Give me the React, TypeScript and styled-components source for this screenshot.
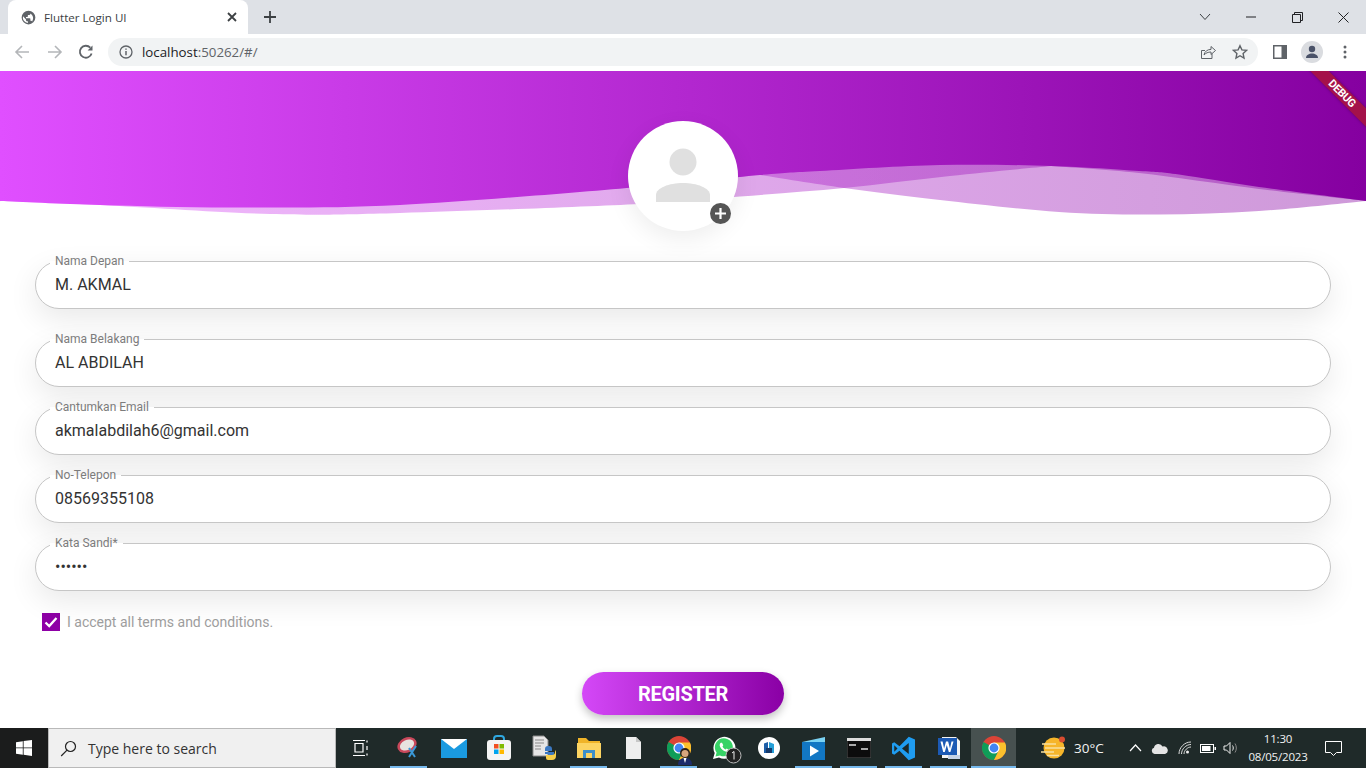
import React from "react";
import styled, { createGlobalStyle } from "styled-components";

const Global = createGlobalStyle`
  html, body { margin: 0; padding: 0; height: 100%; overflow: hidden; background: #fff; }
  * { box-sizing: border-box; }
`;

const Shell = styled.div`
  width: 1366px; height: 768px; display: flex; flex-direction: column; overflow: hidden;
  font-family: Roboto, "Liberation Sans", sans-serif;
`;

/* browser chrome */
const TabStrip = styled.div`
  height: 34px; flex: none; background: #dee1e6; display: flex; align-items: stretch; padding-left: 8px; position: relative;
`;
const Tab = styled.div`
  width: 240px; background: #fff; border-radius: 8px 8px 0 0; display: flex; align-items: center; padding: 0 8px 0 13px;
`;
const TabTitle = styled.span`
  flex: 1; margin-left: 8px; font: 11.6px "Open Sans", "Liberation Sans", sans-serif; color: #3c4043;
`;
const NewTab = styled.div`
  width: 44px; display: flex; align-items: center; justify-content: center; color: #3c4043;
`;
const Spacer = styled.div`flex: 1;`;
const WinButton = styled.div`
  width: 46px; display: flex; align-items: center; justify-content: center; color: #202124;
`;
const Toolbar = styled.div`
  height: 37px; flex: none; background: #fff; display: flex; align-items: center; padding: 0 0 1px 3px;
`;
const NavButton = styled.div<{ $w: number }>`
  width: ${(p) => p.$w}px; height: 28px; display: flex; align-items: center; justify-content: center; flex: none;
`;
const Omnibox = styled.div`
  width: 1150px; height: 28px; margin-left: 6px; background: #f1f3f4; border-radius: 14px; display: flex; align-items: center; padding: 0 10px 0 11px; flex: none;
`;
const Url = styled.span`
  margin-left: 9px; font: 13.3px "Open Sans", "Liberation Sans", sans-serif; color: #202124; flex: 1;
  span { color: #5f6368; }
`;
const OmniIcon = styled.svg<{ $mr: number }>`
  margin-right: ${(p) => p.$mr}px; flex: none;
`;
const Avatar = styled.div`
  width: 22px; height: 22px; border-radius: 50%; background: #dadce0; display: flex; align-items: center; justify-content: center;
`;

/* page */
const Page = styled.main`
  flex: 1; background: #fff; position: relative; overflow: hidden; min-height: 0;
`;
const Header = styled.header`
  height: 160px; position: relative;
`;
const WaveSvg = styled.svg`
  display: block; width: 1366px; height: 160px;
`;
const RibbonClip = styled.div`
  position: absolute; top: 0; right: 0; width: 60px; height: 60px; overflow: hidden;
`;
const Ribbon = styled.div`
  position: absolute; left: -24px; top: 16px; width: 120px; height: 13px; transform: rotate(45deg);
  background: rgba(176, 24, 40, 0.72); box-shadow: 0 0 3px rgba(0,0,0,.3);
  color: #fff; font: 700 11px/13px Roboto, sans-serif; text-align: center; letter-spacing: -0.3px;
`;
const AvatarCircle = styled.div`
  position: absolute; left: 628px; top: 50px; width: 110px; height: 110px; border-radius: 50%; background: #fff;
  box-shadow: 0 8px 24px rgba(0,0,0,.07); display: flex; align-items: center; justify-content: center;
`;
const AddBadge = styled.div`
  position: absolute; right: 7px; bottom: 7px; width: 21px; height: 21px; border-radius: 50%; background: #555; display: flex; align-items: center; justify-content: center;
`;
const Form = styled.form`
  display: flex; flex-direction: column; padding: 30px 35px 0 35px;
`;
const Field = styled.div<{ $mb: number }>`
  height: 48px; margin-bottom: ${(p) => p.$mb}px; border: 1px solid #c6c6c6; border-radius: 24px; background: #fff;
  box-shadow: 0 10px 30px rgba(0,0,0,.09); position: relative; display: flex; align-items: center; padding: 0 19px 2px;
  font-size: 16px; color: #333; flex: none;
`;
const FieldLabel = styled.label`
  position: absolute; left: 14px; top: -8px; padding: 0 5px; background: linear-gradient(#fff0 0 7px, #fff 7px); font-size: 12px; line-height: 14px; color: #7c7c7c;
`;
const CheckRow = styled.div`
  display: flex; align-items: center; margin: 0 0 0 7px; height: 18px; font-size: 14px; color: #9e9e9e; gap: 7px;
`;
const CheckBox = styled.div`
  width: 18px; height: 18px; background: #8e00a6; display: flex; align-items: center; justify-content: center;
`;
const RegisterButton = styled.button`
  align-self: center; margin-top: 41px; width: 202px; height: 43px; border: 0; border-radius: 22px;
  background: linear-gradient(90deg, #d448f7, #8a00a5); color: #fff; font: 700 20px Roboto, sans-serif; letter-spacing: -0.3px; padding: 0;
  box-shadow: 0 4px 8px rgba(0,0,0,.24);
`;

/* taskbar */
const Taskbar = styled.footer`
  height: 40px; flex: none; background: #1f2a29; display: flex; align-items: center; color: #fff;
`;
const StartBtn = styled.div`
  width: 48px; height: 40px; flex: none; display: flex; align-items: center; justify-content: center; background: #1b1c1c;
`;
const Search = styled.div`
  width: 288px; height: 40px; flex: none; background: #f0f0f0; border: 1px solid #b9b9b9; display: flex; align-items: center; padding-left: 11px; gap: 11px;
  font: 14px "Open Sans", "Liberation Sans", sans-serif; color: #333;
`;
const Slot = styled.div<{ $w?: number; $open?: boolean; $active?: boolean }>`
  width: ${(p) => p.$w ?? 45}px; height: 40px; flex: none; display: flex; align-items: center; justify-content: center; position: relative;
  background: ${(p) => (p.$active ? "#475150" : "transparent")};
  &::after {
    content: ""; display: ${(p) => (p.$open ? "block" : "none")}; position: absolute; bottom: 0; left: ${(p) => (p.$active ? 0 : 4)}px; right: ${(p) => (p.$active ? 0 : 4)}px; height: 2px; background: #76b9ed;
  }
`;
const TaskViewSlot = styled(Slot)`
  padding-right: 2px;
`;
const ProfilePhoto = styled.svg`
  position: absolute; left: 21px; top: 19px;
`;
const CountBadge = styled.svg`
  position: absolute; left: 24px; top: 19px;
`;
const WeatherWrap = styled.div`
  display: flex; align-items: center; flex: none; width: 109px; padding-left: 25px;
`;
const Temp = styled.span`
  font: 13.5px "Open Sans", "Liberation Sans", sans-serif; color: #f2f2f2; margin-left: 7px;
`;
const Tray = styled.div`
  display: flex; align-items: center; height: 40px; flex: none;
`;
const TrayItem = styled.div<{ $w: number }>`
  width: ${(p) => p.$w}px; display: flex; align-items: center; justify-content: center;
`;
const Clock = styled.div`
  width: 72px; text-align: center; font: 11.5px/18px "Open Sans", "Liberation Sans", sans-serif; color: #f2f2f2; letter-spacing: -0.2px;
`;
const Notif = styled.div`
  width: 38px; display: flex; align-items: center; justify-content: center;
`;

type Pt = [number, number];
/* Catmull-Rom run through points, written as cubic segments */
const run = (p: Pt[]) => {
  let d = "";
  for (let i = 0; i < p.length - 1; i++) {
    const a = p[Math.max(0, i - 1)], b = p[i], c = p[i + 1], e = p[Math.min(p.length - 1, i + 2)];
    const c1: Pt = [b[0] + (c[0] - a[0]) / 6, b[1] + (c[1] - a[1]) / 6];
    const c2: Pt = [c[0] - (e[0] - b[0]) / 6, c[1] - (e[1] - b[1]) / 6];
    d += `C${c1[0].toFixed(1)} ${c1[1].toFixed(1)} ${c2[0].toFixed(1)} ${c2[1].toFixed(1)} ${c[0]} ${c[1]}`;
  }
  return d;
};
const solid: Pt[] = [[0,130],[100,134],[230,136.5],[400,134],[640,116],[760,104],[820,100],[940,94],[1051,95],[1139,100],[1179,103.5],[1259,116],[1366,130]];
const backLeftA: Pt[] = [[0,130],[100,134],[270,143],[400,142],[640,133],[740,125.5],[844,117],[950,105],[1051,95]];
const backLeftB: Pt[] = [[1051,95],[1139,102],[1259,118],[1366,130]];
const backRight: Pt[] = [[760,104],[844,117],[940,129],[1059,141],[1159,143.5],[1259,140],[1366,130]];
const solidPath = `M0 130${run(solid)}L1366 0L0 0Z`;
const leftPath = `M0 130${run(backLeftA)}${run(backLeftB)}L1366 0L0 0Z`;
const rightPath = `M760 104${run(backRight)}L1366 60L760 60Z`;

const ChromeIcon = ({ s = 24 }: { s?: number }) => (
  <svg width={s} height={s} viewBox="0 0 24 24">
    <circle cx="12" cy="12" r="12" fill="#db4437" />
    <path d="M12 12 1.600 6 A12 12 0 0 0 12 24 L17 14Z" fill="#0f9d58" />
    <path d="M12 6.500H22.900A12 12 0 0 1 12 24L17 14Z" fill="#fbc02d" />
    <circle cx="12" cy="12" r="5.600" fill="#fff" />
    <circle cx="12" cy="12" r="4.400" fill="#4285f4" />
  </svg>
);

const fields: { label: string; value: string; mb: number }[] = [
  { label: "Nama Depan", value: "M. AKMAL", mb: 30 },
  { label: "Nama Belakang", value: "AL ABDILAH", mb: 20 },
  { label: "Cantumkan Email", value: "akmalabdilah6@gmail.com", mb: 20 },
  { label: "No-Telepon", value: "08569355108", mb: 20 },
  { label: "Kata Sandi*", value: "••••••", mb: 22 },
];

export default function App() {
  return (
    <Shell>
      <Global />
      <TabStrip>
        <Tab>
          <svg width="15" height="15" viewBox="0 0 24 24" fill="#5f6368">
            <path d="M12 1a11 11 0 1 0 0 22 11 11 0 0 0 0-22Zm-1 19.900A9 9 0 0 1 3.200 10L8 15v1c0 1.100.9 2 2 2h1v2.900Zm6.900-2.500A2 2 0 0 0 16 17h-1v-3c0-.6-.4-1-1-1H8v-2h2c.6 0 1-.4 1-1V8h2a2 2 0 0 0 2-2v-.4a9 9 0 0 1 2.900 12.800Z" />
          </svg>
          <TabTitle>Flutter Login UI</TabTitle>
          <svg width="16" height="16" viewBox="0 0 16 16" stroke="#3c4043" strokeWidth="1.800" fill="none">
            <path d="M4 4l8 8M12 4l-8 8" />
          </svg>
        </Tab>
        <NewTab>
          <svg width="14" height="14" viewBox="0 0 14 14" stroke="#3c4043" strokeWidth="1.800"><path d="M7 1v12M1 7h12" /></svg>
        </NewTab>
        <Spacer />
        <WinButton>
          <svg width="12" height="8" viewBox="0 0 12 8" stroke="#3c4043" fill="none"><path d="M1 1l5 5.500L11 1" /></svg>
        </WinButton>
        <WinButton>
          <svg width="10" height="2" viewBox="0 0 10 2" stroke="#202124"><path d="M0 1h10" /></svg>
        </WinButton>
        <WinButton>
          <svg width="11" height="11" viewBox="0 0 11 11" stroke="#202124" fill="none"><path d="M.5 2.500h8v8h-8zM2.500 2.500v-2h8v8h-2" /></svg>
        </WinButton>
        <WinButton>
          <svg width="11" height="11" viewBox="0 0 11 11" stroke="#202124" fill="none"><path d="M.5.500l10 10M10.500.500l-10 10" /></svg>
        </WinButton>
      </TabStrip>
      <Toolbar>
        <NavButton $w={38}>
          <svg width="16" height="16" viewBox="0 0 16 16" stroke="#b4b6b9" strokeWidth="1.600" fill="none"><path d="M15 8H2M8 2 2 8l6 6" /></svg>
        </NavButton>
        <NavButton $w={28}>
          <svg width="16" height="16" viewBox="0 0 16 16" stroke="#b4b6b9" strokeWidth="1.600" fill="none"><path d="M1 8h13M8 2l6 6-6 6" /></svg>
        </NavButton>
        <NavButton $w={33}>
          <svg width="16" height="16" viewBox="0 0 16 16" stroke="#5f6368" strokeWidth="1.800" fill="none"><path d="M13.600 9.500A6 6 0 1 1 12.300 3.700" /><path d="M14.500 1.500v4.900H9.600Z" fill="#5f6368" stroke="none" /></svg>
        </NavButton>
        <Omnibox>
          <svg width="14" height="14" viewBox="0 0 14 14" fill="none" stroke="#5f6368" strokeWidth="1.300">
            <circle cx="7" cy="7" r="6" />
            <path d="M7 6v4.200M7 3.400v1.400" strokeWidth="1.500" />
          </svg>
          <Url>localhost<span>:50262/#/</span></Url>
          <OmniIcon $mr={16} width="16" height="16" viewBox="0 0 16 16" stroke="#5f6368" fill="none">
            <path d="M12 9.500V14.500H1.500V6.500H5" />
            <path d="M4 11c.6-3.600 3.500-5.600 7-5.600V2.500l4.500 4-4.500 4V8C8 8 5.800 9 4 11Z" />
          </OmniIcon>
          <OmniIcon $mr={0} width="16" height="16" viewBox="0 0 16 16" stroke="#5f6368" strokeWidth="1.400" fill="none">
            <path d="M8 1.700l1.900 4.200 4.600.5-3.400 3.100.9 4.500-4-2.300-4 2.300.9-4.500-3.400-3.100 4.600-.5Z" />
          </OmniIcon>
        </Omnibox>
        <NavButton $w={43}>
          <svg width="14" height="14" viewBox="0 0 14 14"><rect width="14" height="14" fill="#5f6368" /><rect x="1.500" y="1.500" width="7" height="11" fill="#fff" /></svg>
        </NavButton>
        <NavButton $w={22}>
          <Avatar>
            <svg width="14" height="14" viewBox="0 0 14 14" fill="#4a5268"><circle cx="7" cy="4" r="3.200" /><path d="M1 13c0-3 3-4.500 6-4.500s6 1.500 6 4.500Z" /></svg>
          </Avatar>
        </NavButton>
        <NavButton $w={44}>
          <svg width="4" height="14" viewBox="0 0 4 14" fill="#5f6368"><circle cx="2" cy="2" r="1.500" /><circle cx="2" cy="7" r="1.500" /><circle cx="2" cy="12" r="1.500" /></svg>
        </NavButton>
      </Toolbar>
      <Page>
        <Header>
          <WaveSvg viewBox="0 0 1366 160">
            <defs>
              <linearGradient id="g" gradientUnits="userSpaceOnUse" x1="0" y1="0" x2="1366" y2="0">
                <stop offset="0" stopColor="#e04fff" />
                <stop offset="1" stopColor="#8500a0" />
              </linearGradient>
            </defs>
            <path d={leftPath} fill="url(#g)" opacity=".4" />
            <path d={rightPath} fill="url(#g)" opacity=".4" />
            <path d={solidPath} fill="url(#g)" />
          </WaveSvg>
          <RibbonClip>
            <Ribbon>DEBUG</Ribbon>
          </RibbonClip>
          <AvatarCircle>
            <svg width="56" height="56" viewBox="0 0 56 56" fill="#e0e0e0">
              <circle cx="28" cy="14" r="13.500" />
              <path d="M1 54V47C1 40 14 35 28 35S55 40 55 47V54Z" />
            </svg>
            <AddBadge>
              <svg width="11" height="11" viewBox="0 0 11 11" stroke="#fff" strokeWidth="2.200"><path d="M5.500 0v11M0 5.500h11" /></svg>
            </AddBadge>
          </AvatarCircle>
        </Header>
        <Form>
          {fields.map((f) => (
            <Field key={f.label} $mb={f.mb}>
              <FieldLabel>{f.label}</FieldLabel>
              {f.value}
            </Field>
          ))}
          <CheckRow>
            <CheckBox>
              <svg width="14" height="14" viewBox="0 0 14 14" fill="none" stroke="#fff" strokeWidth="2.300"><path d="M1.500 7.500 5.200 11 12.500 3" /></svg>
            </CheckBox>
            I accept all terms and conditions.
          </CheckRow>
          <RegisterButton type="button">REGISTER</RegisterButton>
        </Form>
      </Page>
      <Taskbar>
        <StartBtn>
          <svg width="16" height="16" viewBox="0 0 16 16" fill="#fff"><path d="M0 2.200 6.800 1.200V7.500H0ZM7.600 1.100 16 0V7.500H7.600ZM0 8.300H6.800V14.700L0 13.800ZM7.600 8.300H16V16L7.600 14.800Z" /></svg>
        </StartBtn>
        <Search>
          <svg width="17" height="17" viewBox="0 0 17 17" fill="none" stroke="#222" strokeWidth="1.200"><circle cx="10.500" cy="6.500" r="5" /><path d="M7 10.200 1.200 16" /></svg>
          Type here to search
        </Search>
        <TaskViewSlot $w={50}>
          <svg width="17" height="16" viewBox="0 0 17 16" fill="none" stroke="#fff" strokeWidth="1.200"><path d="M1 .5h12M1 15.500h12M3 3.500h8v8.500H3zM15 .5v2M15 6v4M15 13.500v2" /></svg>
        </TaskViewSlot>
        <Slot $open>
          <svg width="26" height="24" viewBox="0 0 26 24">
            <ellipse cx="11" cy="9" rx="10" ry="7.500" fill="#c9485b" transform="rotate(-25 11 9)" />
            <ellipse cx="11" cy="9" rx="7.500" ry="5" fill="#e8e3df" transform="rotate(-25 11 9)" />
            <path d="M13 12l6 9M20 10l-7 11" stroke="#3a9ad9" strokeWidth="2" />
          </svg>
        </Slot>
        <Slot>
          <svg width="26" height="22" viewBox="0 0 26 22">
            <rect y="2" width="26" height="19" fill="#1a9ae0" />
            <path d="M0 2h26L13 12Z" fill="#ffffff" />
          </svg>
        </Slot>
        <Slot>
          <svg width="24" height="26" viewBox="0 0 24 26">
            <path d="M7 6V4a3 3 0 0 1 3-3h4a3 3 0 0 1 3 3v2" fill="none" stroke="#2fa8e0" strokeWidth="2" />
            <rect y="5" width="24" height="20" rx="3" fill="#f4f4f4" />
            <rect x="7" y="9" width="4.500" height="4.500" fill="#f25022" /><rect x="12.500" y="9" width="4.500" height="4.500" fill="#7fba00" />
            <rect x="7" y="14.500" width="4.500" height="4.500" fill="#00a4ef" /><rect x="12.500" y="14.500" width="4.500" height="4.500" fill="#ffb900" />
          </svg>
        </Slot>
        <Slot>
          <svg width="24" height="26" viewBox="0 0 24 26">
            <path d="M1 1h11l4 4v16H1Z" fill="#e6e6e6" stroke="#8a8a8a" />
            <path d="M3 5h9M3 8h9M3 11h6M3 14h6" stroke="#888" />
            <path d="M13 11h4a3 3 0 0 1 3 3v2h-7v1h9v2a3 3 0 0 1-3 3h-3v-3h-3v-5a3 3 0 0 1 3-3Z" fill="#3b78c2" />
            <path d="M23 15a3 3 0 0 1 1 2v4a4 4 0 0 1-4 4h-4a2 2 0 0 1-2-2v-3h6a3 3 0 0 0 3-3Z" fill="#f7cf4a" />
          </svg>
        </Slot>
        <Slot $open>
          <svg width="24" height="22" viewBox="0 0 24 22">
            <path d="M1 1h8l3 3h11v16H1Z" fill="#f0b429" />
            <rect y="6" width="24" height="15" fill="#fcd462" />
            <rect x="6" y="13" width="12" height="8" fill="#3d8fc9" />
            <rect x="9" y="16" width="6" height="5" fill="#fcd462" />
          </svg>
        </Slot>
        <Slot>
          <svg width="17" height="22" viewBox="0 0 17 22"><path d="M1 0h10l5 5v17H1Z" fill="#eeeeee" /><path d="M11 0v5h5Z" fill="#c8c8c8" /></svg>
        </Slot>
        <Slot $open>
          <ChromeIcon />
          <ProfilePhoto width="16" height="18" viewBox="0 0 16 18">
            <circle cx="8" cy="6" r="5" fill="#2c2018" />
            <circle cx="8" cy="6.500" r="3.500" fill="#d8a57d" />
            <path d="M1 18c0-5 3-7 7-7s7 2 7 7Z" fill="#1d2c6b" />
            <path d="M6.500 11h3L8 16Z" fill="#fff" />
          </ProfilePhoto>
        </Slot>
        <Slot>
          <svg width="24" height="24" viewBox="0 0 24 24">
            <path d="M1 23l1.700-6A11 11 0 1 1 7 21.400Z" fill="#fff" />
            <path d="M3.500 20.500l1.100-3.900A9 9 0 1 1 8 19.400Z" fill="#37d366" />
            <path d="M8.800 6.800c-1.300 1-1.400 2.600-.6 4.300 1.100 2.200 3 3.800 5.200 4.500 1.700.4 3.100-.3 3.500-1.600l-2.200-1.500-1.100 1c-1.300-.5-2.500-1.700-3.100-3l.8-1.200-1.300-2.500Z" fill="#fff" />
          </svg>
          <CountBadge width="17" height="17" viewBox="0 0 17 17">
            <circle cx="8.500" cy="8.500" r="7.500" fill="#222" stroke="#bbb" />
            <path d="M7 6l2-1.500V12.500" stroke="#eee" fill="none" />
          </CountBadge>
        </Slot>
        <Slot>
          <svg width="22" height="22" viewBox="0 0 22 22">
            <circle cx="11" cy="11" r="11" fill="#fff" />
            <path d="M6 16V6.500L10 5V16Z" fill="#1e5fa8" />
            <path d="M11 5l5 2V16H11Z" fill="#26a0d8" />
            <path d="M8 16v-5h6v5Z" fill="#163a6b" />
          </svg>
        </Slot>
        <Slot $open>
          <svg width="25" height="24" viewBox="0 0 25 24">
            <path d="M1 6 24 1V6Z" fill="#7ad3f4" />
            <path d="M1 6h23v18H1Z" fill="#1277c4" />
            <path d="M9 9.500 18 15 9 20.500Z" fill="#fff" />
          </svg>
        </Slot>
        <Slot $open>
          <svg width="24" height="20" viewBox="0 0 24 20">
            <rect width="24" height="20" fill="#0c0c0c" stroke="#555" />
            <rect width="24" height="3" fill="#ddd" />
            <path d="M2 7h7M14 11h7" stroke="#ddd" strokeWidth="1.400" />
          </svg>
        </Slot>
        <Slot $open>
          <svg width="25" height="25" viewBox="0 0 100 100">
            <path d="M71 3 34 41 13 25 4 30v40l9 5 21-16 37 38 25-11V14Z" fill="#1f9cf0" />
            <path d="M71 28 44 50l27 22Z" fill="#1c2928" />
            <path d="M13 37v26l13-13Z" fill="#1c2928" />
          </svg>
        </Slot>
        <Slot $open>
          <svg width="24" height="24" viewBox="0 0 24 24">
            <path d="M5 1h14l4 4v17H5Z" fill="#f3f3f3" />
            <path d="M4 3h16v16H4Z" fill="#fff" />
            <rect x="1" y="2" width="19" height="17" fill="#1c5ab4" />
            <path d="M3.500 5.500 6.200 16h1.600l2-7 2 7h1.600L16.500 5.500h-2l-1.500 7-1.900-7H9l-1.900 7-1.500-7Z" fill="#fff" />
            <path d="M11 19h12v4H11Z" fill="#c6d3e6" />
          </svg>
        </Slot>
        <Slot $open $active>
          <ChromeIcon />
        </Slot>
        <WeatherWrap>
          <svg width="26" height="24" viewBox="0 0 26 24">
            <circle cx="13" cy="12" r="10.500" fill="#f6b52a" />
            <circle cx="21" cy="3.500" r="3" fill="#d84c30" />
            <path d="M1 8h14M4 12h20M0 16h13M6 19.500h12" stroke="#f8dfa0" strokeWidth="1.400" />
          </svg>
          <Temp>30°C</Temp>
        </WeatherWrap>
        <Tray>
          <TrayItem $w={20}>
            <svg width="13" height="8" viewBox="0 0 13 8" fill="none" stroke="#fff" strokeWidth="1.200"><path d="M1 7l5.500-6L12 7" /></svg>
          </TrayItem>
          <TrayItem $w={28}>
            <svg width="17" height="11" viewBox="0 0 17 11"><path d="M3.500 11A3.200 3.200 0 0 1 3 4.800 4.500 4.500 0 0 1 11.500 3.500 3.800 3.800 0 0 1 14 11Z" fill="#e4e4e4" /></svg>
          </TrayItem>
          <TrayItem $w={23}>
            <svg width="14" height="14" viewBox="0 0 14 14" fill="none" stroke="#ddd" strokeWidth="1"><path d="M1 13C1 6.500 6.500 1 13 1M3.500 13c0-5 4.500-9.500 9.500-9.500M6 13c0-3.500 3.500-7 7-7" /><circle cx="9.500" cy="11" r="1.500" fill="#eee" stroke="none" /></svg>
          </TrayItem>
          <TrayItem $w={23}>
            <svg width="16" height="9" viewBox="0 0 16 9"><rect x=".5" y=".5" width="13" height="8" fill="none" stroke="#fff" /><rect x="2" y="2" width="8.500" height="5" fill="#fff" /><rect x="14.500" y="3" width="1.500" height="3" fill="#fff" /></svg>
          </TrayItem>
          <TrayItem $w={23}>
            <svg width="16" height="14" viewBox="0 0 16 14" fill="none" stroke="#eee"><path d="M1 5h2.500L7 1.500v11L3.500 9H1Z" /><path d="M9.500 4.500c1 1.500 1 3.500 0 5" /><path d="M12 2.500c1.800 3 1.800 6 0 9" stroke="#888" /></svg>
          </TrayItem>
          <Clock>
            11:30
            <br />
            08/05/2023
          </Clock>
          <Notif>
            <svg width="17" height="15" viewBox="0 0 17 15" fill="none" stroke="#fff"><path d="M.5.500h16v11h-5l-3 3-3-3h-5Z" /></svg>
          </Notif>
        </Tray>
      </Taskbar>
    </Shell>
  );
}
